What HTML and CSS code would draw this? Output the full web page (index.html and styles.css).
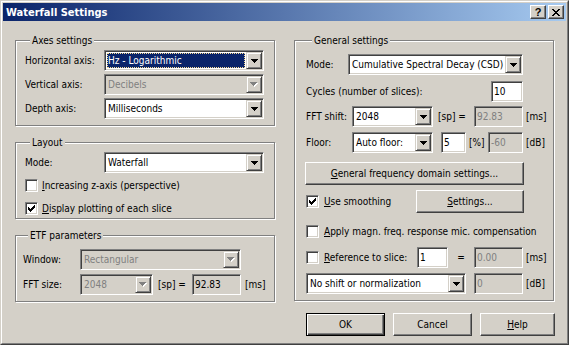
FILE: index.html
```html
<!DOCTYPE html>
<html>
<head>
<meta charset="utf-8">
<title>Waterfall Settings</title>
<link rel="stylesheet" href="styles.css">
</head>
<body>
<div class="window">
 <div class="frame">
  <div class="titlebar">
   <span class="title">Waterfall Settings</span>
   <span class="tbtn help">?</span>
   <span class="tbtn close"><svg width="8" height="7" viewBox="0 0 8 7" shape-rendering="crispEdges"><path d="M0 0h2v1H0zM6 0h2v1H6zM1 1h2v1H1zM5 1h2v1H5zM2 2h4v1H2zM3 3h2v1H3zM2 4h4v1H2zM1 5h2v1H1zM5 5h2v1H5zM0 6h2v1H0zM6 6h2v1H6z"/></svg></span>
  </div>
  <div class="content">
   <div class="col">
    <div class="group axes">
     <div class="legend">Axes settings</div>
     <div class="row first"><span class="lbl w79">Horizontal axis:</span>
      <div class="combo w160"><span class="val"><span class="sel">Hz - Logarithmic</span></span><span class="arrow"><svg width="7" height="4" shape-rendering="crispEdges"><path d="M0 0h7v1H0zM1 1h5v1H1zM2 2h3v1H2zM3 3h1v1H3z"/></svg></span></div></div>
     <div class="row"><span class="lbl w79">Vertical axis:</span>
      <div class="combo w160 dis"><span class="val">Decibels</span><span class="arrow"><svg width="8" height="5" shape-rendering="crispEdges"><path fill="#fff" d="M1 1h7v1H1zM2 2h5v1H2zM3 3h3v1H3zM4 4h1v1H4z"/><path fill="#808080" d="M0 0h7v1H0zM1 1h5v1H1zM2 2h3v1H2zM3 3h1v1H3z"/></svg></span></div></div>
     <div class="row"><span class="lbl w79">Depth axis:</span>
      <div class="combo w160"><span class="val">Milliseconds</span><span class="arrow"><svg width="7" height="4" shape-rendering="crispEdges"><path d="M0 0h7v1H0zM1 1h5v1H1zM2 2h3v1H2zM3 3h1v1H3z"/></svg></span></div></div>
    </div>

    <div class="group layout">
     <div class="legend">Layout</div>
     <div class="row first"><span class="lbl w79">Mode:</span>
      <div class="combo w160"><span class="val">Waterfall</span><span class="arrow"><svg width="7" height="4" shape-rendering="crispEdges"><path d="M0 0h7v1H0zM1 1h5v1H1zM2 2h3v1H2zM3 3h1v1H3z"/></svg></span></div></div>
     <div class="chkrow r1"><span class="chk"></span><span class="lbl"><u>I</u>ncreasing z-axis (perspective)</span></div>
     <div class="chkrow r2"><span class="chk"><svg width="7" height="7" shape-rendering="crispEdges"><path d="M6 0h1v1H6zM5 1h2v1H5zM0 2h1v1H0zM4 2h3v1H4zM0 3h2v1H0zM3 3h3v1H3zM0 4h5v1H0zM1 5h3v1H1zM2 6h1v1H2z"/></svg></span><span class="lbl"><u>D</u>isplay plotting of each slice</span></div>
    </div>

    <div class="group etf">
     <div class="legend">ETF parameters</div>
     <div class="row first"><span class="lbl w57">Window:</span>
      <div class="combo w161 dis"><span class="val">Rectangular</span><span class="arrow"><svg width="8" height="5" shape-rendering="crispEdges"><path fill="#fff" d="M1 1h7v1H1zM2 2h5v1H2zM3 3h3v1H3zM4 4h1v1H4z"/><path fill="#808080" d="M0 0h7v1H0zM1 1h5v1H1zM2 2h3v1H2zM3 3h1v1H3z"/></svg></span></div></div>
     <div class="row r2"><span class="lbl w57">FFT size:</span>
      <div class="combo w73 dis"><span class="val">2048</span><span class="arrow"><svg width="8" height="5" shape-rendering="crispEdges"><path fill="#fff" d="M1 1h7v1H1zM2 2h5v1H2zM3 3h3v1H3zM4 4h1v1H4z"/><path fill="#808080" d="M0 0h7v1H0zM1 1h5v1H1zM2 2h3v1H2zM3 3h1v1H3z"/></svg></span></div>
      <span class="lbl unit-sp">[sp] =</span>
      <span class="edit w49 ro">92.83</span>
      <span class="lbl unit-ms">[ms]</span></div>
    </div>
   </div>

   <div class="col right">
    <div class="group general">
     <div class="legend">General settings</div>
     <div class="row g1"><span class="lbl w42">Mode:</span>
      <div class="combo w175"><span class="val">Cumulative Spectral Decay (CSD)</span><span class="arrow"><svg width="7" height="4" shape-rendering="crispEdges"><path d="M0 0h7v1H0zM1 1h5v1H1zM2 2h3v1H2zM3 3h1v1H3z"/></svg></span></div></div>
     <div class="row g2 w217"><span class="lbl grow">Cycles (number of slices):</span><span class="edit w32">10</span></div>
     <div class="row g3"><span class="lbl w46">FFT shift:</span>
      <div class="combo w81"><span class="val">2048</span><span class="arrow"><svg width="7" height="4" shape-rendering="crispEdges"><path d="M0 0h7v1H0zM1 1h5v1H1zM2 2h3v1H2zM3 3h1v1H3z"/></svg></span></div>
      <span class="lbl sp2">[sp] =</span>
      <span class="edit w49 dis">92.83</span>
      <span class="lbl unit">[ms]</span></div>
     <div class="row g4"><span class="lbl w46">Floor:</span>
      <div class="combo w81"><span class="val">Auto floor:</span><span class="arrow"><svg width="7" height="4" shape-rendering="crispEdges"><path d="M0 0h7v1H0zM1 1h5v1H1zM2 2h3v1H2zM3 3h1v1H3z"/></svg></span></div>
      <span class="edit w25 ml8">5</span>
      <span class="lbl pct">[%]</span>
      <span class="edit w35 dis">-60</span>
      <span class="lbl unit">[dB]</span></div>
     <div class="btn wide"><span><u>G</u>eneral frequency domain settings...</span></div>
     <div class="chkrow smooth"><span class="chk"><svg width="7" height="7" shape-rendering="crispEdges"><path d="M6 0h1v1H6zM5 1h2v1H5zM0 2h1v1H0zM4 2h3v1H4zM0 3h2v1H0zM3 3h3v1H3zM0 4h5v1H0zM1 5h3v1H1zM2 6h1v1H2z"/></svg></span><span class="lbl"><u>U</u>se smoothing</span><div class="btn settings"><span><u>S</u>ettings...</span></div></div>
     <div class="chkrow apply"><span class="chk"></span><span class="lbl"><u>A</u>pply magn. freq. response mic. compensation</span></div>
     <div class="row g7"><span class="chk"></span><span class="lbl refl"><u>R</u>eference to slice:</span>
      <span class="edit w31">1</span>
      <span class="lbl eq">=</span>
      <span class="edit w49 dis">0.00</span>
      <span class="lbl unit">[ms]</span></div>
     <div class="row g8"><div class="combo w160"><span class="val">No shift or normalization</span><span class="arrow"><svg width="7" height="4" shape-rendering="crispEdges"><path d="M0 0h7v1H0zM1 1h5v1H1zM2 2h3v1H2zM3 3h1v1H3z"/></svg></span></div>
      <span class="edit w49 dis ml8">0</span>
      <span class="lbl unit">[dB]</span></div>
    </div>
    <div class="buttons">
     <div class="btn default ok"><span>OK</span></div>
     <div class="btn cancel"><span>Cancel</span></div>
     <div class="btn helpb"><span><u>H</u>elp</span></div>
    </div>
   </div>
  </div>
 </div>
</div>
</body>
</html>
```
FILE: styles.css
```css
* { box-sizing: border-box; }
html, body { margin: 0; padding: 0; }
body {
  background: #d4d0c8;
  font-family: "DejaVu Sans Condensed", "DejaVu Sans", sans-serif;
  font-stretch: condensed;
  font-size: 10px;
  line-height: 13px;
  color: #000;
}
u { text-decoration: underline; text-underline-offset: 1px; }

.window {
  width: 569px; height: 345px;
  border: 1px solid; border-color: #d4d0c8 #404040 #404040 #d4d0c8;
  background: #d4d0c8;
}
.frame {
  height: 100%;
  border: 1px solid; border-color: #fff #808080 #808080 #fff;
  padding: 1px;
}
.titlebar {
  height: 18px;
  display: flex; align-items: center;
  padding: 0 2px 0 3px;
  background: linear-gradient(to right, #0a246a, #a6caf0);
}
.title {
  flex: 1;
  color: #fff; font-weight: bold; font-size: 11px;
  white-space: nowrap;
}
.tbtn {
  width: 16px; height: 14px;
  display: flex; align-items: center; justify-content: center;
  background: #d4d0c8;
  border: 1px solid; border-color: #fff #404040 #404040 #fff;
  box-shadow: inset -1px -1px #808080;
}
.tbtn + .tbtn { margin-left: 2px; }
.tbtn.help { font-family: "Liberation Sans", sans-serif; font-weight: bold; font-size: 11px; line-height: 12px; }
.tbtn svg { display: block; }

.content { display: flex; gap: 19px; padding: 19px 0 0 12px; }
.col { width: 260px; display: flex; flex-direction: column; }

.group {
  border: 1px solid #808080;
  box-shadow: inset 1px 1px #fff, 1px 1px #fff;
}
.legend {
  width: fit-content; height: 13px; line-height: 13px;
  margin: -7px 0 0 5px; padding: 0 2px;
  background: #d4d0c8;
  white-space: nowrap;
}
.axes { padding: 0 0 6px 9px; }
.layout { margin-top: 16px; padding: 0 0 3px 9px; }
.etf { margin-top: 16px; padding: 0 0 6px 7px; }
.general { padding: 0 0 6px 11px; }
.general .legend { margin-left: 6px; }

.row { display: flex; align-items: center; height: 21px; margin-top: 3px; }
.row.first { margin-top: 3px; }
.etf .row.first { margin-top: 7px; }
.etf .row.r2 { margin-top: 4px; }

.lbl { white-space: nowrap; flex: none; }
.grow { flex: 1; }
.w79 { width: 79px; } .w57 { width: 57px; } .w42 { width: 42px; } .w46 { width: 46px; }
.w217 { width: 217px; }

.combo {
  display: flex; height: 21px; flex: none;
  border: 1px solid; border-color: #808080 #fff #fff #808080;
  box-shadow: inset 1px 1px #404040, inset -1px -1px #d4d0c8;
  padding: 1px;
  background: #fff;
}
.w160 { width: 160px; } .w161 { width: 161px; } .w73 { width: 73px; }
.w175 { width: 175px; } .w81 { width: 81px; }
.combo .val {
  flex: 1; min-width: 0;
  display: flex; align-items: center;
  padding-left: 2px;
  white-space: nowrap; overflow: hidden;
}
.combo .val .sel {
  flex: 1; align-self: stretch;
  margin: 1px 1px 1px -1px; padding-left: 1px;
  display: flex; align-items: center;
  background: #0a246a; color: #fff;
  outline: 1px dotted #f5db95; outline-offset: -1px;
}
.combo.dis { background: #d4d0c8; }
.combo.dis .val { color: #808080; }
.arrow {
  width: 16px; height: 17px; flex: none;
  display: flex; align-items: center; justify-content: center;
  background: #d4d0c8;
  border: 1px solid; border-color: #d4d0c8 #404040 #404040 #d4d0c8;
  box-shadow: inset 1px 1px #fff, inset -1px -1px #808080;
}
.arrow svg { display: block; }

.edit {
  display: flex; align-items: center; flex: none;
  height: 21px;
  border: 1px solid; border-color: #808080 #fff #fff #808080;
  box-shadow: inset 1px 1px #404040, inset -1px -1px #d4d0c8;
  padding: 1px 1px 1px 2px;
  background: #fff;
  white-space: nowrap; overflow: hidden;
}
.edit.dis { background: #d4d0c8; color: #808080; }
.edit.ro { background: #d4d0c8; }
.w49 { width: 49px; } .w32 { width: 32px; } .w25 { width: 25px; } .w35 { width: 35px; } .w31 { width: 31px; }
.ml8 { margin-left: 8px; }

.unit-sp { width: 34px; margin-left: 5px; }
.unit-ms { margin-left: 4px; }
.sp2 { width: 36px; margin-left: 5px; }
.unit { margin-left: 3px; }
.pct { width: 19px; margin-left: 3px; }
.eq { width: 26px; text-align: center; }
.refl { width: 93px; margin-left: 5px; }

.chk {
  width: 13px; height: 13px; flex: none;
  border: 1px solid; border-color: #808080 #fff #fff #808080;
  box-shadow: inset 1px 1px #404040, inset -1px -1px #d4d0c8;
  padding: 2px;
  background: #fff;
}
.chk svg { display: block; }
.chkrow { display: flex; align-items: center; gap: 4px; height: 13px; }
.layout .r1 { margin-top: 6px; }
.layout .r2 { margin-top: 10px; }
.general .chkrow { gap: 5px; }

.general .g1 { margin-top: 7px; }
.general .g2 { margin-top: 6px; }
.general .g3 { margin-top: 4px; }
.general .g4 { margin-top: 5px; }
.general .g7 { margin-top: 9px; }
.general .g8 { margin-top: 5px; }

.btn {
  height: 23px; flex: none;
  display: flex; align-items: center; justify-content: center;
  background: #d4d0c8;
  border: 1px solid; border-color: #fff #404040 #404040 #fff;
  box-shadow: inset -1px -1px #808080;
  white-space: nowrap;
}
.btn.wide { width: 219px; margin: 9px 0 0 -1px; }
.chkrow.smooth { height: 23px; width: 218px; margin-top: 5px; }
.btn.settings { width: 108px; margin-left: auto; }
.chkrow.apply { margin-top: 12px; }

.buttons { display: flex; margin-top: 12px; padding-left: 12px; }
.btn.default {
  border: 1px solid #000;
  box-shadow: inset 1px 1px #fff, inset -1px -1px #404040, inset -2px -2px #808080;
}
.ok { width: 79px; }
.cancel { width: 79px; margin-left: 8px; }
.helpb { width: 75px; margin-left: 8px; }
```
